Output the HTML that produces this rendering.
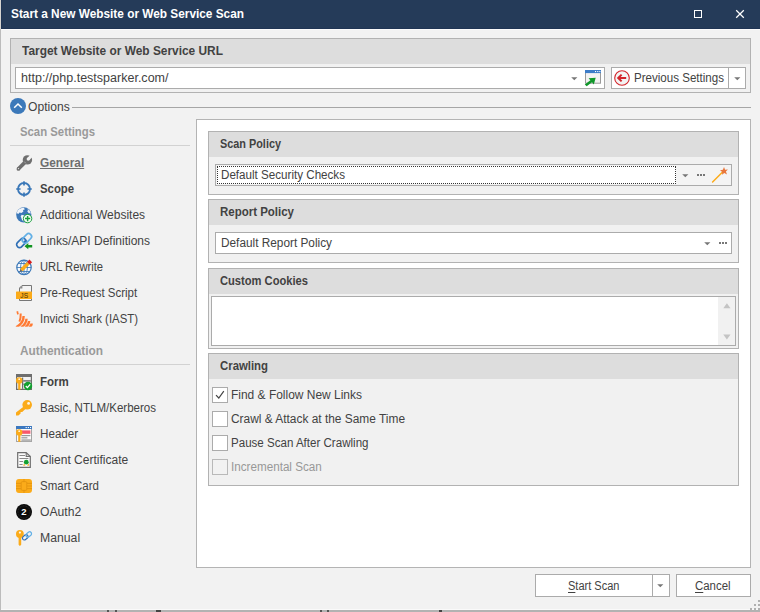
<!DOCTYPE html>
<html lang="en"><head><meta charset="utf-8"><title>Start a New Website or Web Service Scan</title>
<style>
html,body{margin:0;padding:0;}
body{width:760px;height:612px;overflow:hidden;background:#fff;font-family:"Liberation Sans",sans-serif;}
#win{position:absolute;left:0;top:0;width:760px;height:612px;overflow:hidden;background:#f2f2f2;}
.t{position:absolute;white-space:pre;transform-origin:0 0;}
.b{position:absolute;box-sizing:border-box;}
.i{position:absolute;width:16px;height:16px;overflow:visible;}
u{text-decoration:underline;text-underline-offset:2px;}

</style></head>
<body>
<div id="win">
<!-- window chrome -->
<div class="b" style="left:1px;top:0;width:759px;height:29px;background:#253b59;border-bottom:1px solid #203555;border-left:1px solid #203555"></div>
<div class="b" style="left:0;top:0;width:1px;height:29px;background:#d6d4d0"></div>
<div class="b" style="left:1px;top:29px;width:759px;height:1px;background:#fcfcfc"></div>
<div class="b" style="left:0;top:29px;width:1px;height:581px;background:#bcbcbc"></div>
<div class="b" style="left:1px;top:609px;width:759px;height:1px;background:#fafafa"></div>
<div class="b" style="left:0;top:610px;width:760px;height:2px;background:#b2b2b2"></div>
<div class="b" style="left:107px;top:610px;width:2px;height:2px;background:#555"></div>
<div class="b" style="left:115px;top:610px;width:2px;height:2px;background:#555"></div>
<div class="b" style="left:156px;top:610px;width:5px;height:2px;background:#444"></div>
<div class="b" style="left:320px;top:610px;width:2px;height:2px;background:#555"></div>
<div class="b" style="left:327px;top:610px;width:2px;height:2px;background:#555"></div>
<div class="b" style="left:439px;top:610px;width:3px;height:2px;background:#444"></div>
<!-- URL group -->
<div class="b" style="left:10px;top:38px;width:741px;height:55px;border:1px solid #b2b2b2;background:#f1f1f1"></div>
<div class="b" style="left:11px;top:39px;width:739px;height:25px;background:#dddddd"></div>
<div class="b" style="left:15px;top:67px;width:590px;height:22px;border:1px solid #ababab;background:#fff"></div>
<div class="b" style="left:611px;top:67px;width:135px;height:22px;border:1px solid #ababab;background:#fff"></div>
<div class="b" style="left:728px;top:68px;width:1px;height:20px;background:#ababab"></div>
<!-- options line -->
<div class="b" style="left:72px;top:107px;width:679px;height:1px;background:#a6a6a6"></div>
<!-- nav separators -->
<div class="b" style="left:10px;top:145px;width:180px;height:1px;background:#d2d2d2"></div>
<div class="b" style="left:10px;top:364px;width:180px;height:1px;background:#d2d2d2"></div>
<!-- main white panel -->
<div class="b" style="left:196px;top:119px;width:555px;height:449px;border:1px solid #b4b4b4;background:#fff"></div>
<!-- Scan policy -->
<div class="b" style="left:208px;top:131px;width:531px;height:64px;border:1px solid #b2b2b2;background:#f1f1f1"></div>
<div class="b" style="left:209px;top:132px;width:529px;height:25px;background:#dddddd"></div>
<div class="b" style="left:215px;top:164px;width:517px;height:22px;border:1px solid #ababab;background:#f4f4f4"></div>
<div class="b" style="left:217px;top:166px;width:459px;height:18px;border:1px dotted #333;background:#fff"></div>
<!-- Report policy -->
<div class="b" style="left:208px;top:199px;width:531px;height:64px;border:1px solid #b2b2b2;background:#f1f1f1"></div>
<div class="b" style="left:209px;top:200px;width:529px;height:25px;background:#dddddd"></div>
<div class="b" style="left:215px;top:232px;width:517px;height:22px;border:1px solid #ababab;background:#fff"></div>
<!-- Custom cookies -->
<div class="b" style="left:208px;top:268px;width:531px;height:81px;border:1px solid #b2b2b2;background:#f1f1f1"></div>
<div class="b" style="left:209px;top:269px;width:529px;height:25px;background:#dddddd"></div>
<div class="b" style="left:211px;top:296px;width:525px;height:50px;border:1px solid #ababab;background:#fff"></div>
<div class="b" style="left:718px;top:297px;width:17px;height:48px;background:#f1f1f1"></div>
<!-- Crawling -->
<div class="b" style="left:208px;top:353px;width:531px;height:133px;border:1px solid #b2b2b2;background:#f1f1f1"></div>
<div class="b" style="left:209px;top:354px;width:529px;height:25px;background:#dddddd"></div>
<div class="b" style="left:212px;top:387px;width:16px;height:16px;border:1px solid #ababab;background:#fff"></div>
<div class="b" style="left:212px;top:411px;width:16px;height:16px;border:1px solid #ababab;background:#fff"></div>
<div class="b" style="left:212px;top:435px;width:16px;height:16px;border:1px solid #ababab;background:#fff"></div>
<div class="b" style="left:212px;top:459px;width:16px;height:16px;border:1px solid #b9b9b9;background:#f2f2f2"></div>
<!-- buttons -->
<div class="b" style="left:535px;top:574px;width:135px;height:23px;border:1px solid #ababab;background:#fff"></div>
<div class="b" style="left:652px;top:575px;width:1px;height:21px;background:#ababab"></div>
<div class="b" style="left:676px;top:574px;width:75px;height:23px;border:1px solid #ababab;background:#fff"></div>

<!-- title buttons -->
<svg class="i" style="left:690px;top:6px" viewBox="0 0 16 16"><rect x="4.5" y="4.5" width="7" height="7" fill="none" stroke="#fff" stroke-width="1"/></svg>
<svg class="i" style="left:732px;top:6px" viewBox="0 0 16 16"><path d="M4.2 4.2 L11.8 11.8 M11.8 4.2 L4.2 11.8" fill="none" stroke="#fff" stroke-width="1.25"/></svg>
<!-- url dropdown arrow -->
<svg class="b" style="left:571px;top:77px;width:7px;height:4px" viewBox="0 0 7 4"><path d="M0.2 0.3H6.4L3.3 3.3Z" fill="#777"/></svg>
<!-- browser w/ green arrow -->
<svg class="i" style="left:585px;top:70px" viewBox="0 0 16 16">
<rect x="0.5" y="0.5" width="15" height="12.7" fill="#f2f2f2" stroke="#9a9a9a" stroke-width="1"/>
<rect x="0" y="0" width="16" height="3.1" fill="#3c7cc8"/>
<rect x="10" y="1" width="1.1" height="1.1" fill="#fff"/><rect x="12.2" y="1" width="1.1" height="1.1" fill="#fff"/><rect x="14.3" y="1" width="1.1" height="1.1" fill="#fff"/>
<rect x="0" y="8" width="10.6" height="8" fill="#fff" opacity="0.0"/>
<path d="M-0.2 14.4 L1.7 16.3 L7 12.2 L8.8 14.4 L10.7 7.7 L3.6 8.2 L5.4 10.3 Z" fill="#10972a"/>
</svg>
<!-- previous settings: red circle arrow -->
<svg class="i" style="left:614px;top:70px" viewBox="0 0 16 16">
<circle cx="8" cy="8" r="7.3" fill="#f3f3f3" stroke="#d3242a" stroke-width="1.1"/>
<path d="M12.2 8 H4.6 M7.6 4.6 L4.2 8 L7.6 11.4" fill="none" stroke="#d3242a" stroke-width="2"/>
</svg>
<svg class="b" style="left:734px;top:77px;width:7px;height:4px" viewBox="0 0 7 4"><path d="M0.2 0.3H6.4L3.3 3.3Z" fill="#777"/></svg>
<!-- options chevron -->
<svg class="i" style="left:10px;top:98px" viewBox="0 0 16 16"><circle cx="8" cy="8" r="8" fill="#3c79ba"/><path d="M4.2 9.8 L8 6 L11.8 9.8" fill="none" stroke="#fff" stroke-width="1.5"/></svg>

<!-- NAV ICONS -->
<!-- wrench -->
<svg class="i" style="left:16px;top:155px" viewBox="0 0 16 16">
<path d="M8.9 7.4 L2.3 14" stroke="#6f6f6f" stroke-width="3.7" stroke-linecap="butt" fill="none"/>
<circle cx="2.4" cy="13.9" r="1.85" fill="#6f6f6f"/>
<circle cx="11.4" cy="4.9" r="4.7" fill="#6f6f6f"/>
<path d="M8.2 6.6 L9.9 8.3" stroke="#dcdcdc" stroke-width="0.5" fill="none"/>
<circle cx="12.2" cy="4.1" r="1.6" fill="#f2f2f2"/>
<path d="M12.2 4.1 L17 -0.7" stroke="#f2f2f2" stroke-width="2.9" fill="none"/>
<circle cx="2.5" cy="13.6" r="0.7" fill="#e4e4e4"/>
</svg>
<!-- scope -->
<svg class="i" style="left:16px;top:181px" viewBox="0 0 16 16">
<circle cx="8" cy="8" r="6" fill="none" stroke="#3b78b8" stroke-width="1.8"/>
<path d="M8 0.2V4.3M8 11.7V15.8M0.2 8H4.3M11.7 8H15.8" stroke="#3b78b8" stroke-width="1.6" fill="none"/>
<circle cx="8" cy="8" r="4.1" fill="#f2f2f2"/>
<path d="M8 3.6V4.6M8 11.4V12.4M3.6 8H4.6M11.4 8H12.4" stroke="#3b78b8" stroke-width="1.6" fill="none"/>
</svg>
<!-- globe plus -->
<svg class="i" style="left:16px;top:207px" viewBox="0 0 16 16">
<circle cx="7.8" cy="7.8" r="7.6" fill="#3b78b8"/>
<path d="M2.6 2.6 Q5 0.6 8 0.8 L8.8 2.4 L7 3 L7.4 4.4 L5.4 6 L3.6 5.4 L2.2 7 L0.8 6 Q1.2 4 2.6 2.6Z" fill="#f0f4f9"/>
<path d="M10.6 1.2 Q14 2.6 15 6.4 L12.6 6 L11.2 4.2 L12.2 3 Z" fill="#e6edf6"/>
<path d="M5.6 7.8 L8.4 8.6 L8.6 10.6 L7.2 14.6 L5.8 12.2 L4.8 9.4 Z" fill="#f0f4f9"/>
<circle cx="11.6" cy="11.6" r="4.2" fill="#f6fbf6" stroke="#1aa03c" stroke-width="1"/>
<path d="M11.6 9V14.2M9 11.6H14.2" stroke="#1aa03c" stroke-width="1.5" fill="none"/>
</svg>
<!-- links w arrow -->
<svg class="i" style="left:16px;top:233px" viewBox="0 0 16 16">
<rect x="0" y="7" width="10.6" height="5.8" rx="2.7" transform="rotate(-45 5.3 9.9)" fill="none" stroke="#2f6fb5" stroke-width="1.7"/>
<rect x="5.6" y="2.4" width="10.6" height="5.8" rx="2.7" transform="rotate(-45 10.9 5.3)" fill="none" stroke="#63b0e6" stroke-width="1.7"/>
<path d="M8.1 9.2 L9.9 7.4" stroke="#2f6fb5" stroke-width="1.7" fill="none"/>
<path d="M16.2 11.9V14.5H12.3V16.3L8.5 13.2L12.3 10.1V11.9Z" fill="#109420"/>
</svg>
<!-- url rewrite -->
<svg class="i" style="left:16px;top:259px" viewBox="0 0 16 16">
<circle cx="8" cy="8.4" r="7.2" fill="#f7f9fc" stroke="#3b78b8" stroke-width="1.2"/>
<ellipse cx="8" cy="8.4" rx="3.4" ry="7.2" fill="none" stroke="#3b78b8" stroke-width="0.85"/>
<path d="M8 1.2V15.6M0.8 8.5H15.2M2 4.5H14M2 12.5H14" stroke="#3b78b8" stroke-width="0.85" fill="none"/>
<path d="M4.4 10 L3.5 13 L6.5 12.1Z" fill="#666"/>
<path d="M11.1 2.9 L13.6 5.4 L6.7 12.3 L4.2 9.8 Z" fill="#fbab1a"/>
<path d="M13.4 0.6 L16.1 3.3 L13.8 5.6 L11.1 2.9 Z" fill="#d81e1e"/>
</svg>
<!-- js doc -->
<svg class="i" style="left:16px;top:285px" viewBox="0 0 16 16">
<path d="M6 0.5 H15.5 V15.5 H3.5 V3 Z" fill="#f3f3f3" stroke="#777" stroke-width="1"/>
<path d="M3.2 3.4 L6.4 0.2 V3.4Z" fill="#888"/>
<rect x="0" y="6.4" width="16" height="7.6" rx="0.6" fill="#fbab1a"/>
<text x="8.2" y="12.6" font-size="6.6" font-weight="400" font-family="Liberation Sans, sans-serif" fill="#3e300a" text-anchor="middle">JS</text>
</svg>
<!-- invicti shark -->
<svg class="i" style="left:16px;top:311px" viewBox="0 0 16 16">
<g fill="none" stroke="#ff7a33" stroke-linecap="butt">
<path d="M1.4 0.2 Q1.3 1.8 2.1 3.3" stroke-width="1.7"/>
<path d="M4.7 2.5 Q4.9 7 3.4 10.6" stroke-width="2"/>
<path d="M7.6 5 Q7.8 12 0.2 16.2" stroke-width="2.4"/>
<path d="M10.5 7.7 Q10.4 12.8 5.2 16.2" stroke-width="2.4"/>
<path d="M13.1 10 Q13 13.6 9.4 16.2" stroke-width="2.4"/>
<path d="M15.6 12.5 Q15.7 14.8 13 16.2" stroke-width="2.4"/>
</g>
<rect x="-1" y="15.7" width="18" height="2" fill="#f2f2f2"/>
</svg>
<!-- AUTH ICONS -->
<!-- form -->
<svg class="i" style="left:16px;top:374px" viewBox="0 0 16 16">
<rect x="0" y="0" width="16" height="16" fill="#6e6e6e"/>
<rect x="1.2" y="3" width="13.6" height="11.8" fill="#f2f2f2"/>
<rect x="7" y="4.4" width="7" height="1.6" fill="#6e6e6e" opacity="0"/>
<rect x="6" y="3.6" width="1.2" height="11.2" fill="#6e6e6e"/>
<rect x="7.2" y="6.2" width="7.6" height="1.4" fill="#6e6e6e"/>
<rect x="7.2" y="9.6" width="7.6" height="1.2" fill="#6e6e6e"/>
<circle cx="3.2" cy="6.4" r="3.2" fill="#fbab1a"/>
<rect x="2.2" y="8" width="2.2" height="7.8" fill="#fbab1a"/>
<circle cx="3.2" cy="5.2" r="0.9" fill="#fff3d6"/>
<circle cx="12" cy="12" r="4.2" fill="#12a030"/>
<path d="M9.8 12 L11.4 13.6 L14.2 10.4" stroke="#fff" stroke-width="1.3" fill="none"/>
</svg>
<!-- key -->
<svg class="i" style="left:16px;top:400px" viewBox="0 0 16 16">
<circle cx="11.2" cy="4.8" r="4.8" fill="#fbab1a"/>
<path d="M8.4 6 L0 12.6 V15.4 H2.4 L4.6 13.4 V12 H6.2 L10 8.6Z" fill="#fbab1a"/>
<circle cx="12.6" cy="3.4" r="1.4" fill="#fdf6e6"/>
</svg>
<!-- header -->
<svg class="i" style="left:16px;top:426px" viewBox="0 0 16 16">
<rect x="0.5" y="0.5" width="15" height="15" fill="#fafafa" stroke="#a5a5a5" stroke-width="1"/>
<rect x="0" y="0" width="16" height="3" fill="#3b78c0"/>
<rect x="9.6" y="1" width="1.2" height="1.1" fill="#fff"/><rect x="11.8" y="1" width="1.2" height="1.1" fill="#fff"/><rect x="14" y="1" width="1.1" height="1.1" fill="#fff"/>
<rect x="6" y="4.4" width="8.4" height="3.4" fill="#f8586c"/>
<rect x="5.4" y="9" width="9" height="1.2" fill="#999"/>
<rect x="5.4" y="11.2" width="6" height="1.2" fill="#999"/>
<rect x="5.4" y="13.2" width="9.4" height="2" fill="#b5b5b5"/>
<circle cx="3.2" cy="6.4" r="3.2" fill="#fbab1a"/>
<rect x="2.2" y="8" width="2.2" height="7.8" fill="#fbab1a"/>
<circle cx="3.2" cy="5.2" r="0.9" fill="#fff3d6"/>
</svg>
<!-- client cert -->
<svg class="i" style="left:16px;top:452px" viewBox="0 0 16 16">
<path d="M1.7 0.7 H10.2 L14.3 4.4 V15.3 H1.7 Z" fill="#fbfbfb" stroke="#6e6e6e" stroke-width="1.2"/>
<path d="M10.2 0.7 V4.4 H14.3" fill="none" stroke="#6e6e6e" stroke-width="1.1"/>
<path d="M3.4 3.5 H9 M3.4 6.5 H12.4 M3.4 9.5 H7.2 M3.4 12.5 H6.6" stroke="#8a8a8a" stroke-width="1.1" fill="none"/>
<path d="M8 11.4 L7.2 13.8 L9.4 13.4 Z M12.6 11.4 L13.2 13.8 L11 13.4 Z" fill="#fbab1a"/>
<circle cx="10.3" cy="10.2" r="2.4" fill="#12a030"/>
</svg>
<!-- smart card -->
<svg class="i" style="left:16px;top:478px" viewBox="0 0 16 16">
<rect x="0" y="1" width="16" height="14" rx="3" fill="#fbab1a"/>
<g stroke="#e39410" stroke-width="0.9" fill="none">
<path d="M0 5.4 H5 M0 8 H5 M0 10.6 H5 M11 5.4 H16 M11 8 H16 M11 10.6 H16"/>
<path d="M8 1 V3.6 M8 12.4 V15"/>
<rect x="5.2" y="3.6" width="5.6" height="8.8" rx="1.2"/>
</g>
</svg>
<!-- oauth2 -->
<svg class="i" style="left:16px;top:504px" viewBox="0 0 16 16">
<circle cx="8" cy="8" r="8" fill="#0c0c0c"/>
<circle cx="8" cy="8" r="6.1" fill="none" stroke="#444" stroke-width="0.7" stroke-dasharray="0.7 0.9"/>
<text x="8" y="11.3" font-size="9.5" font-weight="700" font-family="Liberation Sans, sans-serif" fill="#fff" text-anchor="middle">2</text>
</svg>
<!-- manual -->
<svg class="i" style="left:16px;top:530px" viewBox="0 0 16 16">
<circle cx="3.9" cy="4" r="3.9" fill="#fbab1a"/>
<path d="M2.6 6.6 H5.2 V14.8 L3.9 16 L2.6 14.8 Z" fill="#fbab1a"/>
<circle cx="3.9" cy="2.6" r="1.1" fill="#fdf6e6"/>
<rect x="6.2" y="5.4" width="6.2" height="3.8" rx="1.9" transform="rotate(-40 9.3 7.3)" fill="none" stroke="#2f6fb5" stroke-width="1.2"/>
<rect x="9.6" y="2.6" width="6.2" height="3.8" rx="1.9" transform="rotate(-40 12.7 4.5)" fill="none" stroke="#63b0e6" stroke-width="1.2"/>
</svg>
<!-- RIGHT PANEL -->
<svg class="b" style="left:682px;top:174px;width:7px;height:4px" viewBox="0 0 7 4"><path d="M0.2 0.3H6.4L3.3 3.3Z" fill="#777"/></svg>
<div class="b" style="left:697px;top:174px;width:2px;height:2px;background:#777"></div>
<div class="b" style="left:700px;top:174px;width:2px;height:2px;background:#777"></div>
<div class="b" style="left:703px;top:174px;width:2px;height:2px;background:#777"></div>
<!-- wand -->
<svg class="i" style="left:712px;top:167px" viewBox="0 0 16 16">
<path d="M0.6 15 L10.6 5" stroke="#fbab1a" stroke-width="1.5" fill="none" stroke-linecap="round"/>
<path d="M12 0 L13.1 2.7 L15.9 2.6 L13.9 4.6 L15 7.4 L12.3 6 L10 7.8 L10.3 4.9 L8 3.2 L10.9 2.8 Z" fill="#e8763c"/>
</svg>
<svg class="b" style="left:704px;top:242px;width:7px;height:4px" viewBox="0 0 7 4"><path d="M0.2 0.3H6.4L3.3 3.3Z" fill="#777"/></svg>
<div class="b" style="left:719px;top:242px;width:2px;height:2px;background:#777"></div>
<div class="b" style="left:722px;top:242px;width:2px;height:2px;background:#777"></div>
<div class="b" style="left:725px;top:242px;width:2px;height:2px;background:#777"></div>
<!-- scroll arrows -->
<svg class="b" style="left:723px;top:303px;width:8px;height:6px" viewBox="0 0 8 6"><path d="M0.3 5.2H7.5L3.9 0.3Z" fill="#c4c4c4"/></svg>
<svg class="b" style="left:723px;top:334px;width:8px;height:6px" viewBox="0 0 8 6"><path d="M0.3 0.5H7.5L3.9 5.4Z" fill="#c4c4c4"/></svg>
<!-- checkmark -->
<svg class="b" style="left:212px;top:387px;width:16px;height:16px" viewBox="0 0 16 16"><path d="M4 8.2 L6.8 11 L11.8 4.2" stroke="#444" stroke-width="1.2" fill="none"/></svg>
<!-- split arrow -->
<svg class="b" style="left:657px;top:584px;width:7px;height:4px" viewBox="0 0 7 4"><path d="M0.2 0.3H6.4L3.3 3.3Z" fill="#777"/></svg>
<!-- size grip -->
<div class="b" style="left:758px;top:600px;width:2px;height:2px;background:#b0b0b0"></div>
<div class="b" style="left:754px;top:604px;width:2px;height:2px;background:#b0b0b0"></div>
<div class="b" style="left:758px;top:604px;width:2px;height:2px;background:#b0b0b0"></div>
<div class="b" style="left:750px;top:608px;width:2px;height:2px;background:#b0b0b0"></div>
<div class="b" style="left:754px;top:608px;width:2px;height:2px;background:#b0b0b0"></div>
<div class="b" style="left:758px;top:608px;width:2px;height:2px;background:#b0b0b0"></div>

<span class="t" style="left:11px;top:5px;font-size:13px;line-height:17px;color:#ffffff;font-weight:700;transform:scaleX(0.9101);">Start a New Website or Web Service Scan</span>
<span class="t" style="left:22px;top:43px;font-size:12px;line-height:16px;color:#424242;font-weight:700;transform:scaleX(0.9914);">Target Website or Web Service URL</span>
<span class="t" style="left:21px;top:70px;font-size:12px;line-height:16px;color:#424242;transform:scaleX(1.0431);">http://php.testsparker.com/</span>
<span class="t" style="left:634px;top:70px;font-size:12px;line-height:16px;color:#424242;transform:scaleX(0.9637);">Previous Settings</span>
<span class="t" style="left:28px;top:98px;font-size:13px;line-height:17px;color:#424242;transform:scaleX(0.9305);">Options</span>
<span class="t" style="left:20px;top:124px;font-size:12px;line-height:16px;color:#9a9a9a;font-weight:700;transform:scaleX(0.9451);">Scan Settings</span>
<span class="t" style="left:20px;top:343px;font-size:12px;line-height:16px;color:#9a9a9a;font-weight:700;transform:scaleX(0.9881);">Authentication</span>
<span class="t" style="left:40.2px;top:155px;font-size:12px;line-height:16px;color:#6e6e6e;font-weight:700;transform:scaleX(0.9887);text-decoration:underline;">General</span>
<span class="t" style="left:40.2px;top:181px;font-size:12px;line-height:16px;color:#424242;font-weight:700;transform:scaleX(0.9468);">Scope</span>
<span class="t" style="left:40.2px;top:207px;font-size:12px;line-height:16px;color:#424242;transform:scaleX(0.9993);">Additional Websites</span>
<span class="t" style="left:40.2px;top:233px;font-size:12px;line-height:16px;color:#424242;transform:scaleX(0.9994);">Links/API Definitions</span>
<span class="t" style="left:40.2px;top:259px;font-size:12px;line-height:16px;color:#424242;transform:scaleX(0.9323);">URL Rewrite</span>
<span class="t" style="left:40.2px;top:285px;font-size:12px;line-height:16px;color:#424242;transform:scaleX(0.9588);">Pre-Request Script</span>
<span class="t" style="left:40.2px;top:311px;font-size:12px;line-height:16px;color:#424242;transform:scaleX(0.9481);">Invicti Shark (IAST)</span>
<span class="t" style="left:40.2px;top:374px;font-size:12px;line-height:16px;color:#424242;font-weight:700;transform:scaleX(0.9600);">Form</span>
<span class="t" style="left:40.2px;top:400px;font-size:12px;line-height:16px;color:#424242;transform:scaleX(0.9610);">Basic, NTLM/Kerberos</span>
<span class="t" style="left:40.2px;top:426px;font-size:12px;line-height:16px;color:#424242;transform:scaleX(0.9705);">Header</span>
<span class="t" style="left:40.2px;top:452px;font-size:12px;line-height:16px;color:#424242;transform:scaleX(1.0019);">Client Certificate</span>
<span class="t" style="left:40.2px;top:478px;font-size:12px;line-height:16px;color:#424242;transform:scaleX(0.9599);">Smart Card</span>
<span class="t" style="left:40.2px;top:504px;font-size:12px;line-height:16px;color:#424242;transform:scaleX(1.0122);">OAuth2</span>
<span class="t" style="left:40.2px;top:530px;font-size:12px;line-height:16px;color:#424242;transform:scaleX(1.0188);">Manual</span>
<span class="t" style="left:220px;top:136px;font-size:12px;line-height:16px;color:#424242;font-weight:700;transform:scaleX(0.9054);">Scan Policy</span>
<span class="t" style="left:221px;top:167px;font-size:12px;line-height:16px;color:#424242;transform:scaleX(0.9683);">Default Security Checks</span>
<span class="t" style="left:220px;top:204px;font-size:12px;line-height:16px;color:#424242;font-weight:700;transform:scaleX(0.9566);">Report Policy</span>
<span class="t" style="left:221px;top:235px;font-size:12px;line-height:16px;color:#424242;transform:scaleX(0.9848);">Default Report Policy</span>
<span class="t" style="left:220px;top:273px;font-size:12px;line-height:16px;color:#424242;font-weight:700;transform:scaleX(0.9294);">Custom Cookies</span>
<span class="t" style="left:220px;top:358px;font-size:12px;line-height:16px;color:#424242;font-weight:700;transform:scaleX(0.9473);">Crawling</span>
<span class="t" style="left:231px;top:387px;font-size:12px;line-height:16px;color:#424242;transform:scaleX(0.9970);">Find &amp; Follow New Links</span>
<span class="t" style="left:231px;top:411px;font-size:12px;line-height:16px;color:#424242;transform:scaleX(0.9920);">Crawl &amp; Attack at the Same Time</span>
<span class="t" style="left:231px;top:435px;font-size:12px;line-height:16px;color:#424242;transform:scaleX(0.9632);">Pause Scan After Crawling</span>
<span class="t" style="left:231px;top:459px;font-size:12px;line-height:16px;color:#989898;transform:scaleX(0.9723);">Incremental Scan</span>
<span class="t" style="left:568px;top:578px;font-size:12px;line-height:16px;color:#424242;transform:scaleX(0.9189);"><u>S</u>tart Scan</span>
<span class="t" style="left:695px;top:578px;font-size:12px;line-height:16px;color:#424242;transform:scaleX(0.9529);"><u>C</u>ancel</span>
</div>
</body></html>
